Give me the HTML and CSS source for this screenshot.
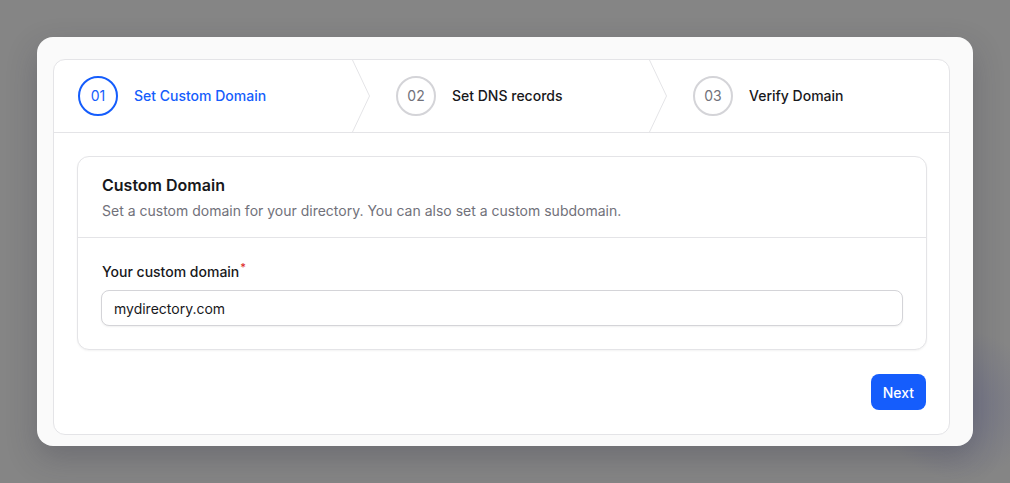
FILE: index.html
```html
<!DOCTYPE html>
<html lang="en">
<head>
<meta charset="utf-8">
<title>Custom Domain</title>
<link rel="stylesheet" href="styles.css">
</head>
<body>
<div class="backdrop">
  <div class="glow"></div>
  <div class="modal">
    <div class="wizard">
      <ol class="steps">
        <li class="step active">
          <span class="circle">01</span>
          <span class="label">Set Custom Domain</span>
          <svg class="chev" viewBox="0 0 18 72" preserveAspectRatio="none"><path d="M0.5 0 L17.5 36 L0.5 72" fill="none" stroke="#e4e4e7" stroke-width="1"/></svg>
        </li>
        <li class="step">
          <span class="circle">02</span>
          <span class="label">Set DNS records</span>
          <svg class="chev" viewBox="0 0 18 72" preserveAspectRatio="none"><path d="M0.5 0 L17.5 36 L0.5 72" fill="none" stroke="#e4e4e7" stroke-width="1"/></svg>
        </li>
        <li class="step">
          <span class="circle">03</span>
          <span class="label">Verify Domain</span>
        </li>
      </ol>
      <div class="body">
        <section class="section">
          <header class="section-head">
            <h2 class="section-title">Custom Domain</h2>
            <p class="section-desc">Set a custom domain for your directory. You can also set a custom subdomain.</p>
          </header>
          <div class="section-content">
            <label class="field-label" for="domain">Your custom domain<sup class="req">*</sup></label>
            <div class="input-wrap">
              <input id="domain" class="input" type="text" value="mydirectory.com">
            </div>
          </div>
        </section>
        <div class="actions">
          <button class="btn" type="button">Next</button>
        </div>
      </div>
    </div>
  </div>
</div>
</body>
</html>
```

FILE: styles.css
```css
* { box-sizing: border-box; }
html, body { margin: 0; padding: 0; }
body {
  width: 1010px;
  height: 483px;
  overflow: hidden;
  background: #858585;
  font-family: Inter, "Noto Sans", sans-serif;
  color: #18181b;
}
.backdrop {
  position: relative;
  width: 1010px;
  height: 483px;
  padding: 37px 37px 0 37px;
}
.glow {
  position: absolute;
  left: 880px;
  top: 330px;
  width: 160px;
  height: 150px;
  border-radius: 50%;
  background: radial-gradient(closest-side, rgba(100,102,135,0.55), rgba(100,102,135,0));
}
.modal {
  position: relative;
  width: 936px;
  height: 409px;
  background: #fafafa;
  border-radius: 16px;
  padding: 22px 23px 11px 16px;
  box-shadow: 0 12px 30px rgba(40, 40, 60, 0.25);
}
.wizard {
  background: #fff;
  border: 1px solid #e4e4e7;
  border-radius: 12px;
  height: 100%;
}
.steps {
  list-style: none;
  margin: 0;
  padding: 0;
  display: grid;
  grid-template-columns: 316px 297px 1fr;
  border-bottom: 1px solid #e4e4e7;
}
.step {
  position: relative;
  display: flex;
  align-items: center;
  gap: 16px;
  height: 72px;
  padding-left: 24px;
  padding-bottom: 1px;
}
.step + .step { padding-left: 26px; }
.circle {
  width: 40px;
  height: 40px;
  border-radius: 50%;
  border: 2px solid #d4d4d8;
  display: flex;
  align-items: center;
  justify-content: center;
  font-size: 14px;
  color: #71717a;
  flex: none;
}
.label {
  font-size: 14px;
  font-weight: 500;
  color: #18181b;
}
.active .circle { border-color: #155dfc; color: #155dfc; }
.active .label { color: #155dfc; }
.chev {
  position: absolute;
  right: 0;
  top: 0;
  width: 18px;
  height: 72px;
}
.body {
  padding: 23px 22px 24px 23px;
}
.section {
  background: #fff;
  border: 1px solid #e4e4e7;
  border-radius: 12px;
  box-shadow: 0 1px 2px rgba(0,0,0,0.05);
}
.section-head {
  padding: 16px 24px 16px;
  border-bottom: 1px solid #e4e4e7;
}
.section-title {
  margin: 0;
  font-size: 16px;
  line-height: 24px;
  font-weight: 600;
  color: #18181b;
}
.section-desc {
  margin: 4px 0 0;
  font-size: 14px;
  line-height: 20px;
  color: #71717a;
}
.section-content {
  padding: 24px 23px 23px;
}
.field-label {
  display: block;
  font-size: 14px;
  line-height: 20px;
  font-weight: 500;
  color: #18181b;
  padding-left: 1px;
}
.req {
  color: #dc2626;
  font-size: 11px;
  line-height: 0;
  vertical-align: 6px;
  margin-left: 1px;
}
.input-wrap { margin-top: 8px; }
.input {
  display: block;
  width: 100%;
  height: 36px;
  border: 1px solid #d4d4d8;
  border-radius: 8px;
  padding: 0 12px;
  font-family: Inter, "Noto Sans", sans-serif;
  font-size: 14px;
  color: #18181b;
  background: #fff;
  box-shadow: 0 1px 2px rgba(0,0,0,0.06);
  outline: none;
}
.actions {
  display: flex;
  justify-content: flex-end;
  margin-top: 24px;
  padding-right: 1px;
}
.btn {
  height: 36px;
  padding: 0 12px;
  border: none;
  border-radius: 8px;
  background: #155dfc;
  color: #fff;
  font-family: Inter, "Noto Sans", sans-serif;
  font-size: 14px;
  font-weight: 500;
}
```
